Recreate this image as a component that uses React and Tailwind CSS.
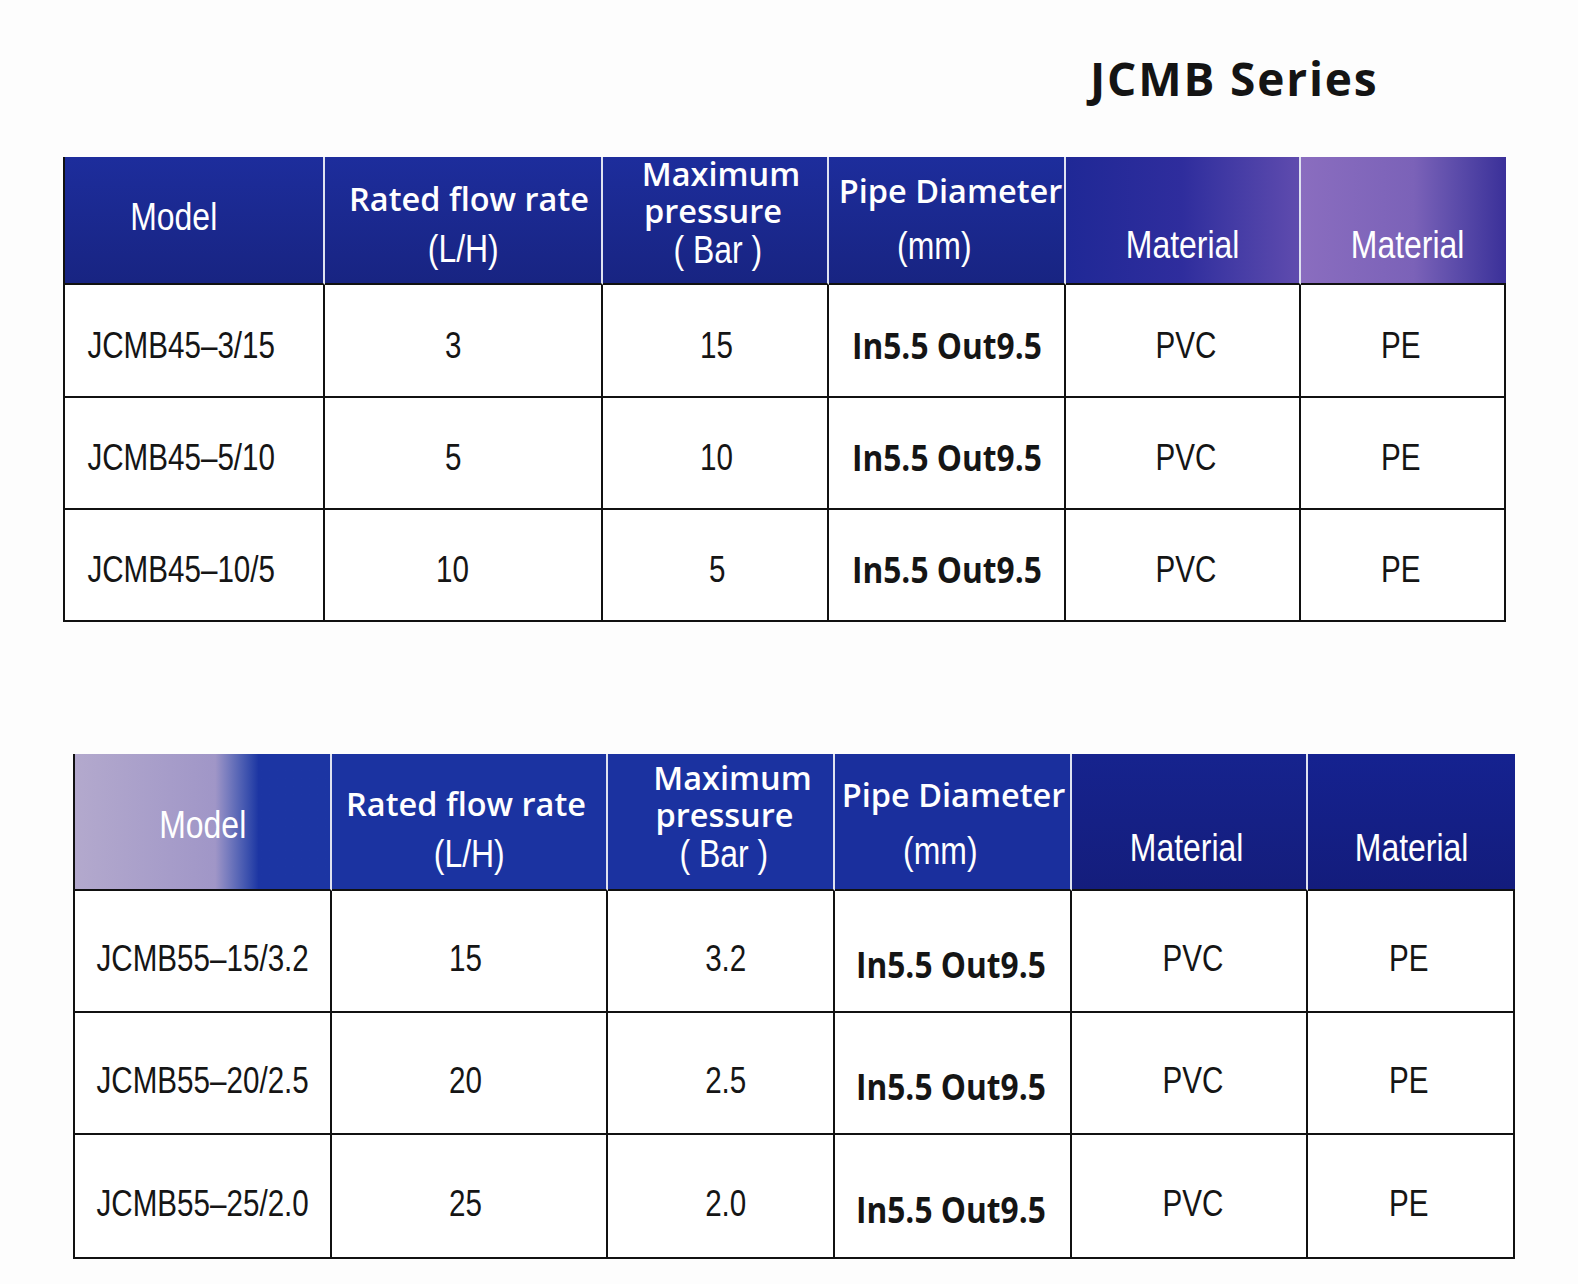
import React from "react";

const ARIAL = "font-['Liberation_Sans',Arial,sans-serif]";
const OPEN = "font-['Open_Sans','Noto_Sans',sans-serif]";

// header line styles
const HUM = `block ${OPEN} font-semibold text-[32.5px] text-white whitespace-nowrap`;
const NAR = `block ${ARIAL} text-[38px] text-white whitespace-nowrap scale-x-[0.84]`;

// body text styles
const BODY = `inline-block ${ARIAL} text-[37px] text-[#151515] whitespace-nowrap scale-x-[0.8]`;
const BOLD = `inline-block ${OPEN} font-bold text-[36px] text-[#151515] whitespace-nowrap scale-x-[0.88]`;

const TABLE_ONE = {
  wrap: "ml-[63px] mt-[54px] w-fit grid grid-cols-[260px_278px_226px_237px_235px_205px] grid-rows-[128px_113px_112px_112px] border-l-2 border-[#111]",
  head: [
    {
      bg: "bg-linear-to-b from-[#1d2d9c] to-[#182482]",
      pad: "pt-[40px]",
      lines: [{ text: "Model", cls: `${NAR} leading-[40px] -translate-x-[20px]` }],
    },
    {
      bg: "bg-linear-to-b from-[#1d2d9c] to-[#182482]",
      pad: "pt-[17px]",
      lines: [
        { text: "Rated flow rate", cls: `${HUM} leading-[50px] translate-x-[6px]` },
        { text: "(L/H)", cls: `${NAR} leading-[50px]` },
      ],
    },
    {
      bg: "bg-linear-to-b from-[#1d2d9c] to-[#182482]",
      pad: "pt-0",
      lines: [
        { text: "Maximum", cls: `${HUM} leading-[34px] translate-x-[6px]` },
        { text: "pressure", cls: `${HUM} leading-[40px] -translate-x-[2px]` },
        { text: "( Bar )", cls: `${NAR} leading-[38px] translate-x-[3px]` },
      ],
    },
    {
      bg: "bg-linear-to-b from-[#1d2d9c] to-[#182482]",
      pad: "pt-[14px]",
      lines: [
        { text: "Pipe Diameter", cls: `${HUM} leading-[40px] translate-x-[4px]` },
        { text: "(mm)", cls: `${NAR} leading-[40px] mt-[15px] -translate-x-[12px]` },
      ],
    },
    {
      bg: "bg-linear-to-r from-[#1f2896] via-[#2f2d9d] via-50% to-[#5f4bae]",
      pad: "pt-[68px]",
      lines: [{ text: "Material", cls: `${NAR} leading-[40px]` }],
    },
    {
      bg: "bg-linear-to-r from-[#8a6dbf] via-[#7b62b8] via-55% to-[#3b3099]",
      pad: "pt-[68px]",
      lines: [{ text: "Material", cls: `${NAR} leading-[40px] translate-x-[4px]` }],
    },
  ],
  cellPad: "pt-[10px]",
  colShift: [
    "-translate-x-[13px]",
    "-translate-x-[10px]",
    "translate-x-[2px]",
    "translate-x-0",
    "translate-x-[4px]",
    "-translate-x-[2px]",
  ],
  rows: [
    ["JCMB45–3/15", "3", "15", "In5.5 Out9.5", "PVC", "PE"],
    ["JCMB45–5/10", "5", "10", "In5.5 Out9.5", "PVC", "PE"],
    ["JCMB45–10/5", "10", "5", "In5.5 Out9.5", "PVC", "PE"],
  ],
};

const TABLE_TWO = {
  wrap: "ml-[73px] mt-[132px] w-fit grid grid-cols-[257px_276px_227px_237px_236px_207px] grid-rows-[137px_122px_122px_124px] border-l-2 border-[#111]",
  head: [
    {
      bg: "bg-linear-to-r from-[#b3a9cd] via-[#a096c7] via-55% to-[#1c35a3] to-72%",
      pad: "pt-[51px]",
      lines: [{ text: "Model", cls: `${NAR} leading-[40px]` }],
    },
    {
      bg: "bg-[#1b33a1]",
      pad: "pt-[25px]",
      lines: [
        { text: "Rated flow rate", cls: `${HUM} leading-[50px] -translate-x-[3px]` },
        { text: "(L/H)", cls: `${NAR} leading-[50px]` },
      ],
    },
    {
      bg: "bg-[#1b32a0]",
      pad: "pt-[7px]",
      lines: [
        { text: "Maximum", cls: `${HUM} leading-[34px] translate-x-[12px]` },
        { text: "pressure", cls: `${HUM} leading-[40px] translate-x-[4px]` },
        { text: "( Bar )", cls: `${NAR} leading-[38px] translate-x-[3px]` },
      ],
    },
    {
      bg: "bg-[#1a2f9d]",
      pad: "pt-[21px]",
      lines: [
        { text: "Pipe Diameter", cls: `${HUM} leading-[40px] translate-x-[1px]` },
        { text: "(mm)", cls: `${NAR} leading-[40px] mt-[16px] -translate-x-[12px]` },
      ],
    },
    {
      bg: "bg-linear-to-b from-[#16238e] to-[#141d7c]",
      pad: "pt-[74px]",
      lines: [{ text: "Material", cls: `${NAR} leading-[40px] -translate-x-[2px]` }],
    },
    {
      bg: "bg-linear-to-b from-[#152290] to-[#131c7c]",
      pad: "pt-[74px]",
      lines: [{ text: "Material", cls: `${NAR} leading-[40px]` }],
    },
  ],
  cellPad: "pt-[16px]",
  colShift: [
    "translate-x-0",
    "-translate-x-[3px]",
    "translate-x-[5px]",
    "-translate-x-[2px] translate-y-[6px]",
    "translate-x-[4px]",
    "translate-x-[-2px]",
  ],
  rows: [
    ["JCMB55–15/3.2", "15", "3.2", "In5.5 Out9.5", "PVC", "PE"],
    ["JCMB55–20/2.5", "20", "2.5", "In5.5 Out9.5", "PVC", "PE"],
    ["JCMB55–25/2.0", "25", "2.0", "In5.5 Out9.5", "PVC", "PE"],
  ],
};

function HeadCell({ cell, last }) {
  return (
    <div
      className={`${cell.bg} ${cell.pad} flex flex-col items-center border-b-2 border-b-[#111] ${
        last ? "" : "border-r-2 border-r-[#dfe2f0]"
      }`}
    >
      {cell.lines.map((l) => (
        <span key={l.text} className={l.cls}>
          {l.text}
        </span>
      ))}
    </div>
  );
}

function SpecTable({ data }) {
  return (
    <div className={data.wrap}>
      {data.head.map((cell, i) => (
        <HeadCell key={i} cell={cell} last={i === data.head.length - 1} />
      ))}
      {data.rows.map((row, r) =>
        row.map((val, c) => (
          <div
            key={`${r}-${c}`}
            className={`bg-white border-r-2 border-b-2 border-[#111] flex items-center justify-center ${data.cellPad}`}
          >
            <span className={`${c === 3 ? BOLD : BODY} ${data.colShift[c]}`}>{val}</span>
          </div>
        ))
      )}
    </div>
  );
}

export default function App() {
  return (
    <div className="w-[1578px] h-[1284px] bg-[#fdfdfd] flex flex-col overflow-hidden">
      {/* Title */}
      <h1
        className={`ml-[1090px] mt-[54px] ${OPEN} font-bold text-[46px] leading-[49px] tracking-[0.04em] text-[#141414] whitespace-nowrap`}
      >
        JCMB Series
      </h1>

      <SpecTable data={TABLE_ONE} />
      <SpecTable data={TABLE_TWO} />
    </div>
  );
}
